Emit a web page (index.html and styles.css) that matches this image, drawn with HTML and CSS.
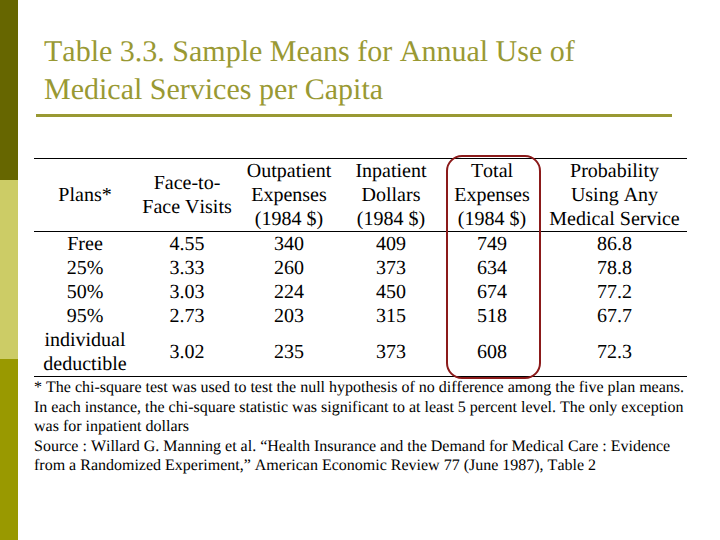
FILE: index.html
```html
<!DOCTYPE html>
<html>
<head>
<meta charset="utf-8">
<link rel="stylesheet" href="styles.css">
</head>
<body>
<div class="slide">
  <div class="sidebar">
    <div class="seg seg-dark"></div>
    <div class="seg seg-light"></div>
    <div class="seg seg-olive"></div>
  </div>
  <div class="content">
    <div class="title">Table 3.3. Sample Means for Annual Use of<br>Medical Services per Capita</div>
    <div class="rule"></div>
    <div class="table-wrap">
      <table class="data">
        <colgroup>
          <col class="c1"><col class="c2"><col class="c3"><col class="c4"><col class="c5"><col class="c6">
        </colgroup>
        <thead>
          <tr>
            <th>Plans*</th>
            <th>Face-to-<br>Face Visits</th>
            <th>Outpatient<br>Expenses<br>(1984 $)</th>
            <th>Inpatient<br>Dollars<br>(1984 $)</th>
            <th>Total<br>Expenses<br>(1984 $)</th>
            <th>Probability<br>Using Any<br>Medical Service</th>
          </tr>
        </thead>
        <tbody>
          <tr><td>Free</td><td>4.55</td><td>340</td><td>409</td><td>749</td><td>86.8</td></tr>
          <tr><td>25%</td><td>3.33</td><td>260</td><td>373</td><td>634</td><td>78.8</td></tr>
          <tr><td>50%</td><td>3.03</td><td>224</td><td>450</td><td>674</td><td>77.2</td></tr>
          <tr><td>95%</td><td>2.73</td><td>203</td><td>315</td><td>518</td><td>67.7</td></tr>
          <tr><td>individual<br>deductible</td><td>3.02</td><td>235</td><td>373</td><td>608</td><td>72.3</td></tr>
        </tbody>
      </table>
      <div class="highlight"></div>
    </div>
    <div class="notes">
      <p>* The chi-square test was used to test the null hypothesis of no difference among the five plan means.<br>In each instance, the chi-square statistic was significant to at least 5 percent level. The only exception<br>was for inpatient dollars</p>
      <p>Source : Willard G. Manning et al. “Health Insurance and the Demand for Medical Care : Evidence<br>from a Randomized Experiment,” American Economic Review 77 (June 1987), Table 2</p>
    </div>
  </div>
</div>
</body>
</html>
```

FILE: styles.css
```css
html, body {
  margin: 0;
  padding: 0;
  background: #ffffff;
}
.slide {
  width: 720px;
  height: 540px;
  display: flex;
  overflow: hidden;
  font-family: "Liberation Serif", "Times New Roman", serif;
  text-rendering: geometricPrecision;
  font-kerning: none;
}
.sidebar {
  width: 18px;
  display: flex;
  flex-direction: column;
  flex-shrink: 0;
}
.seg-dark { height: 180px; background: #666600; }
.seg-light { height: 179px; background: #cccc66; }
.seg-olive { flex: 1; background: #999900; }
.content {
  flex: 1;
  padding-left: 16px;
  color: #000;
}
.title {
  margin: 33px 0 0 10px;
  font-size: 30px;
  line-height: 38px;
  color: #999933;
}
.rule {
  margin: 5px 0 0 2px;
  width: 636px;
  height: 3px;
  background: #999933;
}
.table-wrap {
  position: relative;
  margin-top: 41px;
  width: 653px;
}
.data {
  width: 653px;
  border-collapse: collapse;
  table-layout: fixed;
  font-size: 20px;
  line-height: 24px;
  border-top: 1.5px solid #000;
  border-bottom: 1.5px solid #000;
}
.c1, .c2, .c3, .c4 { width: 102px; }
.c5 { width: 100px; }
.c6 { width: 145px; }
.data th, .data td {
  padding: 0;
  text-align: center;
  font-weight: normal;
  vertical-align: middle;
  white-space: nowrap;
}
.data thead tr { border-bottom: 1.5px solid #000; }
.highlight {
  position: absolute;
  left: 412px;
  top: -3px;
  width: 91px;
  bottom: -2px;
  border: 2px solid #8b1a1a;
  border-radius: 16px;
}
.notes {
  margin-top: 1px;
  font-size: 16px;
  line-height: 19.5px;
  white-space: nowrap;
}
.notes p { margin: 0; }
```
